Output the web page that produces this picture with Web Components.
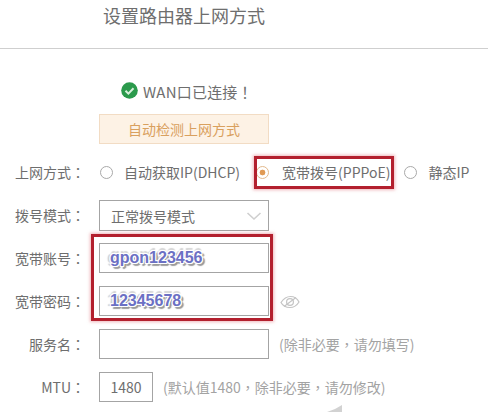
<!DOCTYPE html>
<html lang="zh">
<head>
<meta charset="utf-8">
<title>设置路由器上网方式</title>
<style>
  html, body { margin: 0; background: #fff; }
  body {
    width: 488px;
    height: 412px;
    overflow: hidden;
    font-family: "Noto Sans CJK SC", "Noto Sans", sans-serif;
    color: #6e6e6e;
  }
</style>
</head>
<body>
<wan-setup></wan-setup>

<script>
(() => {
  class PageHeader extends HTMLElement {
    constructor() {
      super();
      this.attachShadow({ mode: "open" });
      this.shadowRoot.innerHTML = `
        <style>
          :host {
            display: block;
            height: 48px;
            border-bottom: 1px solid #cfcfcf;
            padding-left: 103px;
            font-size: 18px;
            line-height: 31px;
            color: #6e6e6e;
          }
        </style>
        <slot></slot>
      `;
    }
  }

  class StatusLine extends HTMLElement {
    constructor() {
      super();
      this.attachShadow({ mode: "open" });
      this.shadowRoot.innerHTML = `
        <style>
          :host {
            display: flex;
            align-items: center;
            gap: 5px;
            height: 30px;
            padding-left: 121px;
            font-size: 15px;
            letter-spacing: .2px;
            color: #6e6e6e;
          }
          svg { display: block; flex: none; margin-top: -1px; }
        </style>
        <svg width="17" height="17" viewBox="0 0 17 17">
          <circle cx="8.500" cy="8.500" r="8.300" fill="#2b9a4c"/>
          <path d="M4.500 8.700l2.900 2.900 5.100-5.300" fill="none" stroke="#d8f0dc" stroke-width="2"/>
        </svg>
        <slot></slot>
      `;
    }
  }

  class ActionButton extends HTMLElement {
    constructor() {
      super();
      this.attachShadow({ mode: "open" });
      this.shadowRoot.innerHTML = `
        <style>
          :host {
            display: flex;
            align-items: center;
            justify-content: center;
            box-sizing: border-box;
            width: 170px;
            height: 30px;
            background: #fdf2e5;
            border: 1px solid #f2dcc4;
            font-size: 14px;
            color: #d9a05e;
          }
        </style>
        <slot></slot>
      `;
    }
  }

  class FormRow extends HTMLElement {
    constructor() {
      super();
      this.attachShadow({ mode: "open" });
      this.shadowRoot.innerHTML = `
        <style>
          :host {
            display: flex;
            align-items: center;
            height: 30px;
            font-size: 14px;
            color: #6e6e6e;
          }
          .label {
            flex: none;
            width: 85px;
            margin-right: 14px;
            text-align: right;
            white-space: nowrap;
          }
          .colon { font-family: "Noto Sans CJK TC", sans-serif; }
        </style>
        <span class="label"><span class="name"></span><span class="colon" lang="zh-Hant">：</span></span>
        <slot></slot>
      `;
    }

    connectedCallback() {
      this.shadowRoot.querySelector(".name").textContent = this.getAttribute("label") ?? "";
    }
  }

  class RadioOption extends HTMLElement {
    constructor() {
      super();
      this.attachShadow({ mode: "open" });
      this.shadowRoot.innerHTML = `
        <style>
          :host {
            display: flex;
            align-items: center;
            gap: 11px;
            font-size: 14px;
            color: #6e6e6e;
            white-space: nowrap;
          }
          :host([checked]) { gap: 13px; }
          .dot {
            flex: none;
            box-sizing: border-box;
            width: 13px;
            height: 13px;
            border: 1px solid #a9a9a9;
            border-radius: 50%;
          }
          :host([checked]) .dot {
            border-color: #e2b98c;
            background: radial-gradient(circle, #e09a55 0 2.6px, #fff 3.2px);
          }
        </style>
        <span class="dot"></span>
        <slot></slot>
      `;
    }
  }

  class TextField extends HTMLElement {
    constructor() {
      super();
      this.attachShadow({ mode: "open" });
      this.shadowRoot.innerHTML = `
        <style>
          :host {
            display: flex;
            align-items: center;
            box-sizing: border-box;
            flex: none;
            width: 170px;
            height: 30px;
            padding: 0 11px;
            background: #fff;
            border: 1px solid #a4a4a4;
            font-size: 14px;
            color: #6e6e6e;
          }
          :host([select]) { height: 31px; margin-top: 1px; }
          :host(.short) {
            width: 54px;
            padding: 0;
            justify-content: center;
          }
          :host(.scrawl) {
            padding-left: 10px;
            font-family: "Liberation Sans", sans-serif;
            font-size: 16px;
            font-weight: 700;
            color: #6b70c4;
            text-shadow:
              1px 0 0 #fff, -1px 0 0 #fff, 0 1px 0 #fff, 0 -1px 0 #fff,
              1px 1px 0 #fff, -1px -1px 0 #fff, 1px -1px 0 #fff, -1px 1px 0 #fff,
              3px 2px 1px #9a9a9a, 2px 3px 1px #a0a0a0,
              -3px 0 1px #d0d0d0, 0 -3px 1px #d6d6d6;
          }
          .chevron { margin-left: auto; margin-right: -5px; display: none; }
          :host([select]) .chevron { display: block; }
        </style>
        <slot></slot>
        <svg class="chevron" width="16" height="10" viewBox="0 0 16 10">
          <path d="M1.500 2l6.500 6 6.500-6" fill="none" stroke="#cfcfcf" stroke-width="1.600"/>
        </svg>
      `;
    }
  }

  class HintText extends HTMLElement {
    constructor() {
      super();
      this.attachShadow({ mode: "open" });
      this.shadowRoot.innerHTML = `
        <style>
          :host {
            display: block;
            margin-left: 10px;
            font-size: 14px;
            color: #a3a3a3;
            white-space: nowrap;
          }
        </style>
        <slot></slot>
      `;
    }
  }

  class EyeIcon extends HTMLElement {
    constructor() {
      super();
      this.attachShadow({ mode: "open" });
      this.shadowRoot.innerHTML = `
        <style>
          :host { display: block; margin-left: 11px; margin-top: 2px; }
          svg { display: block; }
        </style>
        <svg width="20" height="14" viewBox="0 0 20 14" fill="none" stroke="#c4c4c4" stroke-width="1.200">
          <path d="M1 7.500c3-4.500 7-6 9.500-6s6.500 1.500 8.500 5.500c-2.500 4-6 5.500-9 5.500S3 11 1 7.500z"/>
          <circle cx="10" cy="7" r="3.400"/>
          <path d="M4 11.500l12-9"/>
        </svg>
      `;
    }
  }

  class WanSetup extends HTMLElement {
    constructor() {
      super();
      this.attachShadow({ mode: "open" });
      this.shadowRoot.innerHTML = `
        <style>
          :host { display: block; position: relative; width: 488px; height: 412px; overflow: hidden; }
          .body { display: flex; flex-direction: column; padding-top: 27px; }
          .action { padding: 8px 0 13px 99px; }
          .rows { display: flex; flex-direction: column; gap: 13px; }
          .options { display: flex; align-items: center; }
          .options radio-option:nth-child(1) { margin-left: 1px; }
          .options radio-option:nth-child(2) { margin-left: 16px; }
          .options radio-option:nth-child(3) { margin-left: 14px; }
          .punct { font-family: "Noto Sans CJK TC", sans-serif; }
          .mark {
            position: absolute;
            box-sizing: border-box;
            border: 3px solid #b3202e;
            box-shadow: 0 0 3px 1px rgba(225, 120, 130, .55);
            pointer-events: none;
          }
          .mark.mode { left: 254px; top: 156px; width: 140px; height: 33px; }
          .mark.account { left: 91px; top: 234px; width: 182px; height: 87px; }
          .scrap { position: absolute; left: 326px; top: 405px; }
        </style>
        <page-header>设置路由器上网方式</page-header>
        <div class="body">
          <status-line><span>WAN口已连接<span class="punct" lang="zh-Hant">！</span></span></status-line>
          <div class="action"><action-button>自动检测上网方式</action-button></div>
          <div class="rows">
            <form-row label="上网方式">
              <div class="options">
                <radio-option>自动获取IP(DHCP)</radio-option>
                <radio-option checked>宽带拨号(PPPoE)</radio-option>
                <radio-option>静态IP</radio-option>
              </div>
            </form-row>
            <form-row label="拨号模式"><text-field select>正常拨号模式</text-field></form-row>
            <form-row label="宽带账号"><text-field class="scrawl">gpon123456</text-field></form-row>
            <form-row label="宽带密码"><text-field class="scrawl">12345678</text-field><eye-icon></eye-icon></form-row>
            <form-row label="服务名"><text-field></text-field><hint-text>(除非必要<span class="punct" lang="zh-Hant">，</span>请勿填写)</hint-text></form-row>
            <form-row label="MTU"><text-field class="short">1480</text-field><hint-text>(默认值1480<span class="punct" lang="zh-Hant">，</span>除非必要<span class="punct" lang="zh-Hant">，</span>请勿修改)</hint-text></form-row>
          </div>
        </div>
        <div class="mark mode"></div>
        <div class="mark account"></div>
        <svg class="scrap" width="18" height="7" viewBox="0 0 18 7">
          <path d="M1 7l8-3 7-4v7z" fill="#d2d2d2"/>
        </svg>
      `;
    }
  }

  customElements.define("page-header", PageHeader);
  customElements.define("status-line", StatusLine);
  customElements.define("action-button", ActionButton);
  customElements.define("form-row", FormRow);
  customElements.define("radio-option", RadioOption);
  customElements.define("text-field", TextField);
  customElements.define("hint-text", HintText);
  customElements.define("eye-icon", EyeIcon);
  customElements.define("wan-setup", WanSetup);
})();
</script>
</body>
</html>
